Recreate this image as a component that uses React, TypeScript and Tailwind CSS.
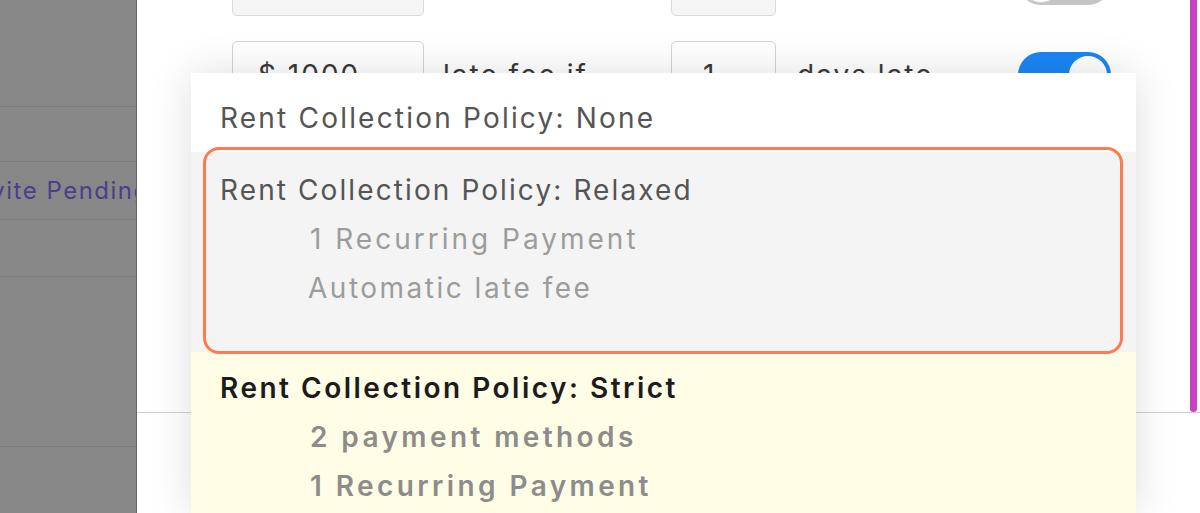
import React from "react";

function Toggle({ on }: { on: boolean }) {
  return (
    <div
      className={
        "flex h-[46px] w-[93px] items-center rounded-full p-[2px] " +
        (on ? "justify-end bg-[#1a86f4]" : "justify-start bg-[#c4c4c4]")
      }
    >
      <div
        className={
          "h-[42px] w-[42px] rounded-full bg-white " +
          (on ? "border-2 border-[#1a86f4]" : "border border-[#d0d0d0]")
        }
      />
    </div>
  );
}

function Row({
  amount,
  label1,
  days,
  label2,
  on,
  disabled,
}: {
  amount: string;
  label1: string;
  days: string;
  label2: string;
  on: boolean;
  disabled?: boolean;
}) {
  return (
    <div className="flex h-[68px] items-center text-[28px] tracking-[2px] text-[#3a3a3a]">
      <div
        className={
          "ml-[95px] flex h-[68px] w-[192px] items-center rounded-[5px] border pl-[25px] " +
          (disabled ? "border-[#dadada] bg-[#f5f5f5]" : "border-[#d4d4d4] bg-white")
        }
      >
        {amount}
      </div>
      <div className="ml-[19px] w-[228px]">{label1}</div>
      <div
        className={
          "flex h-[68px] w-[105px] items-center rounded-[5px] border pl-[31px] " +
          (disabled ? "border-[#dadada] bg-[#f5f5f5]" : "border-[#d4d4d4] bg-white")
        }
      >
        {days}
      </div>
      <div className="ml-[21px] w-[221px]">{label2}</div>
      <Toggle on={on} />
    </div>
  );
}

export default function App() {
  return (
    <div className="relative flex h-[513px] w-[1200px] overflow-hidden bg-white font-['Inter',sans-serif]">
      {/* page behind the overlay */}
      <div className="flex w-[136px] shrink-0 flex-col overflow-hidden bg-[#878787]">
        <div className="h-[107px] shrink-0 border-b border-[#7b7b7b]" />
        <div className="h-[55px] shrink-0 border-b border-[#7b7b7b]" />
        <div className="flex h-[58px] shrink-0 items-center whitespace-nowrap border-b border-[#7b7b7b] text-[24px] tracking-[1.5px] text-[#4a3f8c]">
          <span className="-ml-[32px]">Invite Pending</span>
        </div>
        <div className="h-[57px] shrink-0 border-b border-[#7b7b7b]" />
        <div className="h-[170px] shrink-0 border-b border-[#7b7b7b]" />
        <div className="flex-1" />
      </div>
      <div className="w-px shrink-0 bg-[#656565]" />

      {/* modal */}
      <div className="flex flex-1 flex-col bg-white">
        <div className="flex h-[412px] shrink-0">
          <div className="flex flex-1 flex-col gap-[25px] overflow-hidden">
            <div className="-mt-[52px]">
              <Row amount="$ 500" label1="discount if" days="5" label2="days early" on={false} disabled />
            </div>
            <Row amount="$ 1000" label1="late fee if" days="1" label2="days late" on />
          </div>
          <div className="flex w-[10px] shrink-0">
            <div className="h-full w-[7px] rounded-b-[4px] bg-[#c842bf]" />
          </div>
        </div>
        <div className="h-px shrink-0 bg-[#cfcfcf]" />
        <div className="flex-1" />
      </div>

      {/* dropdown menu */}
      <div className="absolute bottom-0 left-[191px] top-[73px] flex w-[945px] flex-col bg-white text-[28px] leading-[49px] shadow-[0_0_40px_rgba(0,0,0,0.13)]">
        <div className="h-[79px] shrink-0 pl-[29px] pt-[21px] tracking-[2.2px] text-[#555555]">
          Rent Collection Policy: None
        </div>
        <div className="relative h-[200px] shrink-0 bg-[#f4f4f4] pl-[29px] pt-[14px]">
          <div className="absolute -bottom-[2px] -top-[5px] left-[12px] right-[13px] rounded-[16px] border-[3px] border-[#ff7a4e]" />
          <div className="tracking-[2.1px] text-[#555555]">Rent Collection Policy: Relaxed</div>
          <div className="pl-[90px] tracking-[3px] text-[#9c9c9c]">1 Recurring Payment</div>
          <div className="pl-[88px] tracking-[2.5px] text-[#9c9c9c]">Automatic late fee</div>
        </div>
        <div className="flex-1 bg-[#fffde5] pl-[29px] pt-[12px] font-semibold">
          <div className="tracking-[2.5px] text-[#1c1c1c]">Rent Collection Policy: Strict</div>
          <div className="pl-[90px] tracking-[3.4px] text-[#8c8c8c]">2 payment methods</div>
          <div className="pl-[90px] tracking-[3.4px] text-[#8c8c8c]">1 Recurring Payment</div>
        </div>
      </div>
    </div>
  );
}
